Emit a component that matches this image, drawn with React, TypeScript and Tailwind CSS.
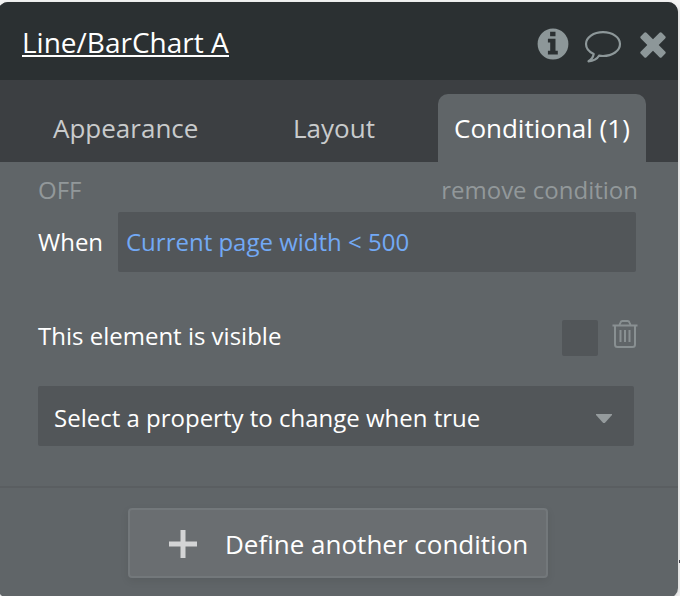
import React from "react";

function InfoIcon() {
  return (
    <svg width="32" height="32" viewBox="0 0 32 32" className="block">
      <circle cx="16" cy="16" r="15.4" fill="#8d9799" />
      <path d="M13.1 3.7h5.4v4.6h-5.4zM10.900 10.800h7.600v11.900h2.300v3.700h-9.900v-3.700h2.300v-8.200h-2.300z" fill="#2b3032" />
    </svg>
  );
}

function CommentIcon() {
  return (
    <svg width="38" height="34" viewBox="0 0 38 34" className="block" fill="none" stroke="#8d9799" strokeWidth="2.2" strokeLinejoin="round">
      <path d="M19 2.200C9.500 2.200 2 7.400 2 14c0 4.300 3 7.800 7.700 10C9.200 26.800 7.500 29.500 4.500 31.300c4.500-.3 8.500-2.200 10.500-5.600 1.300.2 2.600.3 4 .3 9.500 0 17-5.300 17-12S28.500 2.200 19 2.200Z" />
    </svg>
  );
}

function CloseIcon() {
  return (
    <svg width="26" height="26" viewBox="0 0 26 26" className="block" fill="#8d9799">
      <rect x="-1.800" y="9" width="29.600" height="8" rx="1.600" transform="rotate(45 13 13)" />
      <rect x="-1.800" y="9" width="29.600" height="8" rx="1.600" transform="rotate(-45 13 13)" />
    </svg>
  );
}

function TrashIcon() {
  return (
    <svg width="26" height="28" viewBox="0 0 26 28" className="block" fill="none" stroke="#899092" strokeWidth="2">
      <path d="M.5 5.500h25M3 6v18.500Q3 27 5.500 27h15q2.500 0 2.500-2.500V6" />
      <path d="M7.500 5 8.500 2.500Q9 1 10.500 1h5Q17 1 17.500 2.500l1 2.500M8.500 10v12M13 10v12M17.500 10v12" />
    </svg>
  );
}

export default function App() {
  return (
    <div className="relative h-[596px] w-[680px] overflow-hidden bg-[#f5f5f5] pt-[2px] font-['Open_Sans',sans-serif]">
      <div className="-ml-[2px] flex h-[596px] w-[680px] flex-col overflow-hidden rounded-[10px] bg-[#606568] shadow-[0_2px_6px_rgba(0,0,0,0.15)]">
        <header className="flex h-[78px] shrink-0 items-center bg-[#2b3032] pl-6">
          <h1 className="mt-[3px] w-[207px] whitespace-nowrap border-b-2 border-white text-[28px] leading-[27px] text-white">
            <span className="relative top-[1px]">Line/BarChart A</span>
          </h1>
          <div className="ml-[308px] mt-[5px] flex items-center">
            <InfoIcon />
            <div className="ml-[15px] mt-[7px]"><CommentIcon /></div>
            <div className="ml-[18px] mt-[3px]"><CloseIcon /></div>
          </div>
        </header>
        <nav className="flex h-[82px] shrink-0 items-end bg-[#3c3f42] text-[26px] leading-[36px] whitespace-nowrap text-[#c9cbcc]">
          <div className="flex h-[68px] w-[216px] items-center pl-[55px]">Appearance</div>
          <div className="flex h-[68px] w-[224px] items-center pl-[79px]">Layout</div>
          <div className="flex h-[68px] w-[208px] items-center rounded-t-[10px] bg-[#606568] pl-4 text-white">Conditional (1)</div>
        </nav>
        <section className="h-[324px] shrink-0 pl-10 pr-[39px] text-[24px] leading-[34px] whitespace-nowrap text-white">
          <div className="flex h-[50px] w-[600px] items-center justify-between pt-[6px] text-[#92989a]">
            <span>OFF</span>
            <span>remove condition</span>
          </div>
          <div className="flex h-[60px] items-center">
            <span className="w-20">When</span>
            <div className="flex h-[60px] w-[518px] items-center rounded-[2px] bg-[#525659] pl-2 text-[#72a9f5]">Current page width &lt; 500</div>
          </div>
          <div className="mt-12 flex h-9 items-center">
            <span className="w-[524px] pb-[5px]">This element is visible</span>
            <div className="h-9 w-9 shrink-0 rounded-[2px] bg-[#525659]" />
            <div className="mb-2 ml-[14px]"><TrashIcon /></div>
          </div>
          <div className="mt-[30px] flex h-[60px] w-[596px] items-center justify-between rounded-[2px] bg-[#525659] pl-4 pr-[22px]">
            <span className="pt-[4px]">Select a property to change when true</span>
            <svg width="16" height="9" viewBox="0 0 16 9" className="mt-[5px]"><path d="M0 0h16v1L8.800 9H7.200L0 1Z" fill="#959b9d" /></svg>
          </div>
        </section>
        <footer className="grow border-t-2 border-[#5a5e61] pt-5">
          <button className="ml-[130px] flex h-[70px] w-[420px] items-center rounded-[4px] border-2 border-[#73787b] bg-[#6a6e71] pl-[39px] shadow-[0_3px_8px_rgba(0,0,0,0.08)]">
            <svg width="28" height="28" viewBox="0 0 28 28" className="mt-[2px]"><path d="M11.500 0h5v11.500H28v5H16.500V28h-5V16.500H0v-5h11.500Z" fill="#d3d4d5" /></svg>
            <span className="ml-7 whitespace-nowrap pt-[2px] text-[26px] leading-9 text-white">Define another condition</span>
          </button>
        </footer>
      </div>
      <div className="absolute right-0 top-[560px] h-[3px] w-px bg-[#44444c]" />
    </div>
  );
}
